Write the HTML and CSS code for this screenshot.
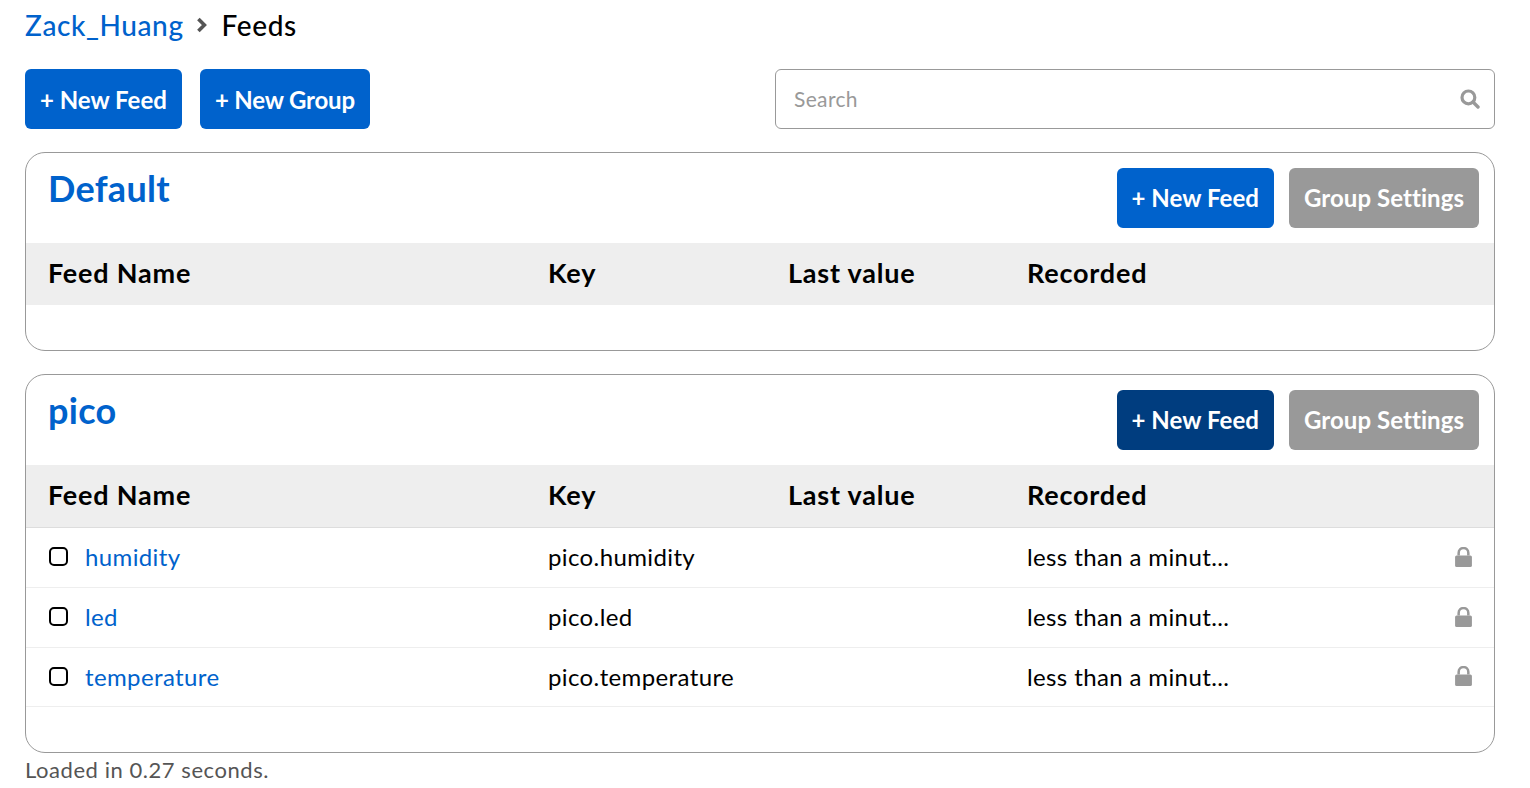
FILE: index.html
```html
<!DOCTYPE html>
<html lang="en">
<head>
<meta charset="utf-8">
<title>Feeds</title>
<link rel="stylesheet" href="styles.css">
</head>
<body>
<nav class="crumbs">
  <a href="#" class="link">Zack_Huang</a>
  <svg class="chev" viewBox="0 0 12 16" width="12" height="16"><path d="M2.4 2 8.4 8l-6 6" fill="none" stroke="#555" stroke-width="3.6"/></svg>
  <span>Feeds</span>
</nav>
<div class="toolbar">
  <div class="actions">
    <button class="btn primary">+ New Feed</button>
    <button class="btn primary tight">+ New Group</button>
  </div>
  <div class="search">
    <span class="placeholder">Search</span>
    <svg viewBox="0 0 20 20" width="20" height="20"><circle cx="8.4" cy="8.4" r="6.4" fill="none" stroke="#999" stroke-width="3.2"/><path d="M13 13l5 5" stroke="#999" stroke-width="3.4" stroke-linecap="round"/></svg>
  </div>
</div>

<section class="group empty">
  <header class="group-head">
    <h2><a href="#" class="link">Default</a></h2>
    <div class="group-actions">
      <button class="btn primary">+ New Feed</button>
      <button class="btn grey">Group Settings</button>
    </div>
  </header>
  <div class="row head"><div>Feed Name</div><div>Key</div><div>Last value</div><div>Recorded</div><div></div></div>
</section>

<section class="group">
  <header class="group-head">
    <h2><a href="#" class="link">pico</a></h2>
    <div class="group-actions">
      <button class="btn dark">+ New Feed</button>
      <button class="btn grey">Group Settings</button>
    </div>
  </header>
  <div class="row head ruled"><div>Feed Name</div><div>Key</div><div>Last value</div><div>Recorded</div><div></div></div>
  <div class="row item">
    <div class="name"><span class="check"></span><a href="#" class="link">humidity</a></div><div>pico.humidity</div><div></div><div>less than a minut...</div>
    <div class="lock"><svg viewBox="0 0 16 19" width="17" height="20"><path d="M3.4 8V5.6a4.6 4.6 0 0 1 9.2 0V8" fill="none" stroke="#999" stroke-width="2.4"/><rect y="8" width="16" height="11" rx="1.5" fill="#999"/></svg></div>
  </div>
  <div class="row item">
    <div class="name"><span class="check"></span><a href="#" class="link">led</a></div><div>pico.led</div><div></div><div>less than a minut...</div>
    <div class="lock"><svg viewBox="0 0 16 19" width="17" height="20"><path d="M3.4 8V5.6a4.6 4.6 0 0 1 9.2 0V8" fill="none" stroke="#999" stroke-width="2.4"/><rect y="8" width="16" height="11" rx="1.5" fill="#999"/></svg></div>
  </div>
  <div class="row item">
    <div class="name"><span class="check"></span><a href="#" class="link">temperature</a></div><div>pico.temperature</div><div></div><div>less than a minut...</div>
    <div class="lock"><svg viewBox="0 0 16 19" width="17" height="20"><path d="M3.4 8V5.6a4.6 4.6 0 0 1 9.2 0V8" fill="none" stroke="#999" stroke-width="2.4"/><rect y="8" width="16" height="11" rx="1.5" fill="#999"/></svg></div>
  </div>
</section>
<footer class="foot">Loaded in 0.27 seconds.</footer>
</body>
</html>
```
FILE: styles.css
```css
* { box-sizing: border-box; }
html, body { height: 100%; overflow: hidden; }
body {
  margin: 0;
  padding: 0 35px 0 25px;
  background: #fff;
  color: #000;
  font-family: Lato, "Noto Sans", sans-serif;
  font-size: 24px;
}
.link { color: #0062cc; text-decoration: none; }
.crumbs {
  display: flex;
  align-items: center;
  height: 50px;
  font-size: 28px;
  font-weight: 500;
  letter-spacing: 0.6px;
}
.chev { margin: 0 14px 0 12px; }
.toolbar {
  display: flex;
  justify-content: space-between;
  margin-top: 19px;
}
.actions, .group-actions { display: flex; gap: 18px; }
.group-actions { gap: 15px; }
.btn {
  height: 60px;
  padding: 0 15px;
  border: 0;
  border-radius: 6px;
  color: #fff;
  font: 700 24px Lato, "Noto Sans", sans-serif;
  white-space: nowrap;
}
.tight { letter-spacing: -0.18px; }
.group-actions .btn { letter-spacing: 0.06px; padding-bottom: 2px; }
.primary { background: #0062cc; }
.dark { background: #003d7f; }
.grey { background: #999; }
.search {
  width: 720px;
  height: 60px;
  border: 1px solid #999;
  border-radius: 6px;
  padding: 0 14px 2px 18px;
  display: flex;
  align-items: center;
  justify-content: space-between;
  color: #999;
  font-size: 21px;
  letter-spacing: 0.35px;
}
.search svg { margin-top: 2px; }
.group {
  margin-top: 23px;
  height: 379px;
  border: 1px solid #999;
  border-radius: 20px;
  overflow: hidden;
}
.group.empty { height: 199px; }
.group-head {
  height: 90px;
  padding: 15px 15px 0 22px;
  display: flex;
  justify-content: space-between;
}
h2 { margin: 0; font-size: 36px; line-height: 40px; font-weight: 700; letter-spacing: 0.3px; }
.row {
  display: grid;
  grid-template-columns: 499px 240px 239px 1fr 39px;
  align-items: center;
}
.row > div { padding-left: 23px; }
.head > div:first-child { padding-left: 22px; }
.head {
  height: 62px;
  padding-bottom: 4px;
  background: #eee;
  font-weight: 700;
  font-size: 27px;
  letter-spacing: 0.8px;
}
.ruled { height: 63px; border-bottom: 1px solid #ddd; }
.item {
  height: 60px;
  padding-bottom: 2px;
  border-bottom: 1px solid #eee;
  font-size: 24px;
  letter-spacing: 0.38px;
}
.item:last-of-type { height: 59px; }
.row.item > .name { display: flex; align-items: center; gap: 17px; }
.check {
  width: 19px;
  height: 19px;
  border: 2px solid #000;
  border-radius: 5px;
}
.row > .lock { padding-left: 0; display: flex; }
.foot { margin-top: 3px; color: #555; font-size: 22px; letter-spacing: 0.55px; }
```
